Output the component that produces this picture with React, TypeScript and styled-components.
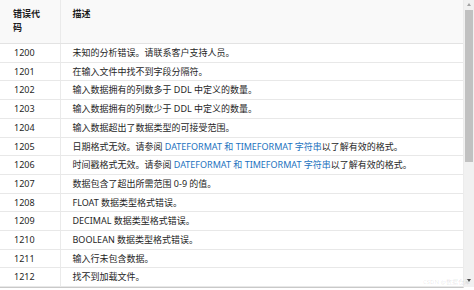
import * as React from "react"
import styled, { createGlobalStyle } from "styled-components"

const GlobalStyle = createGlobalStyle`
  html, body {
    margin: 0;
    padding: 0;
    background: #ffffff;
  }
  body {
    font-family: "Noto Sans", "Noto Sans CJK SC", sans-serif;
    font-size: 9px;
    color: #262626;
  }
`

interface ErrorRow {
    code: string;
    text: React.ReactNode;
}

const Link = styled.a`
  color: #1c72c0;
  text-decoration: none;
`

const rows: ErrorRow[] = [
    { code: "1200", text: "未知的分析错误。请联系客户支持人员。" },
    { code: "1201", text: "在输入文件中找不到字段分隔符。" },
    { code: "1202", text: "输入数据拥有的列数多于 DDL 中定义的数量。" },
    { code: "1203", text: "输入数据拥有的列数少于 DDL 中定义的数量。" },
    { code: "1204", text: "输入数据超出了数据类型的可接受范围。" },
    { code: "1205", text: <>日期格式无效。请参阅 <Link>DATEFORMAT 和 TIMEFORMAT 字符串</Link>以了解有效的格式。</> },
    { code: "1206", text: <>时间戳格式无效。请参阅 <Link>DATEFORMAT 和 TIMEFORMAT 字符串</Link>以了解有效的格式。</> },
    { code: "1207", text: "数据包含了超出所需范围 0-9 的值。" },
    { code: "1208", text: "FLOAT 数据类型格式错误。" },
    { code: "1209", text: "DECIMAL 数据类型格式错误。" },
    { code: "1210", text: "BOOLEAN 数据类型格式错误。" },
    { code: "1211", text: "输入行未包含数据。" },
    { code: "1212", text: "找不到加载文件。" },
]

const Frame = styled.div`
  position: relative;
  width: 474px;
  height: 290px;
  display: flex;
  align-items: flex-start;
  overflow: hidden;
`

const TableArea = styled.div`
  width: 463px;
  height: 287px;
  overflow: hidden;
  border-bottom: 1px solid #c9c9c9;
  border-right: 1px solid #ececec;
`

const Table = styled.table`
  width: 100%;
  table-layout: fixed;
  border-collapse: collapse;
  border-spacing: 0;
`

const HeadCell = styled.th<{ $first?: boolean }>`
  width: ${p => (p.$first ? "60px" : "auto")};
  box-sizing: border-box;
  padding: 7px ${p => (p.$first ? "13px" : "12px")} 8px ${p => (p.$first ? "13px" : "12px")};
  background: #f9f9f9;
  border-bottom: 1px solid #e3e3e3;
  border-right: ${p => (p.$first ? "1px solid #eaeaea" : "none")};
  font-weight: 700;
  line-height: 14px;
  text-align: left;
  vertical-align: top;
  color: #1d1d1d;
`

const Cell = styled.td<{ $first?: boolean }>`
  height: 17.7px;
  padding: 0 0 0 ${p => (p.$first ? "14px" : "12px")};
  border-bottom: 1px solid #e8e8e8;
  border-right: ${p => (p.$first ? "1px solid #eaeaea" : "none")};
  line-height: 17.7px;
  white-space: nowrap;
  vertical-align: middle;
`

const ScrollBar = styled.div`
  width: 10px;
  height: 287px;
  background: #f1f1f1;
  display: flex;
  flex-direction: column;
  align-items: center;
`

const Arrow = styled.div<{ $down?: boolean }>`
  width: 0;
  height: 0;
  margin: ${p => (p.$down ? "auto 0 5px" : "3px 0 3px")};
  border-left: 2.5px solid transparent;
  border-right: 2.5px solid transparent;
  ${p => (p.$down ? "border-top: 3px solid #505050;" : "border-bottom: 3px solid #a3a3a3;")}
`

const Thumb = styled.div`
  width: 8px;
  height: 152px;
  margin-top: 1px;
  background: #c1c1c1;
`

const Watermark = styled.div`
  position: absolute;
  right: 4px;
  bottom: 4px;
  font-size: 6px;
  color: rgba(0, 0, 0, 0.1);
  white-space: nowrap;
`

export default function App() {
    return (
        <>
            <GlobalStyle />
            <Frame>
                <TableArea>
                    <Table>
                        <thead>
                            <tr>
                                <HeadCell $first>错误代码</HeadCell>
                                <HeadCell>描述</HeadCell>
                            </tr>
                        </thead>
                        <tbody>
                            {rows.map(r => (
                                <tr key={r.code}>
                                    <Cell $first>{r.code}</Cell>
                                    <Cell>{r.text}</Cell>
                                </tr>
                            ))}
                        </tbody>
                    </Table>
                </TableArea>
                <ScrollBar>
                    <Arrow />
                    <Thumb />
                    <Arrow $down />
                </ScrollBar>
                <Watermark>CSDN @数据仓库</Watermark>
            </Frame>
        </>
    )
}
